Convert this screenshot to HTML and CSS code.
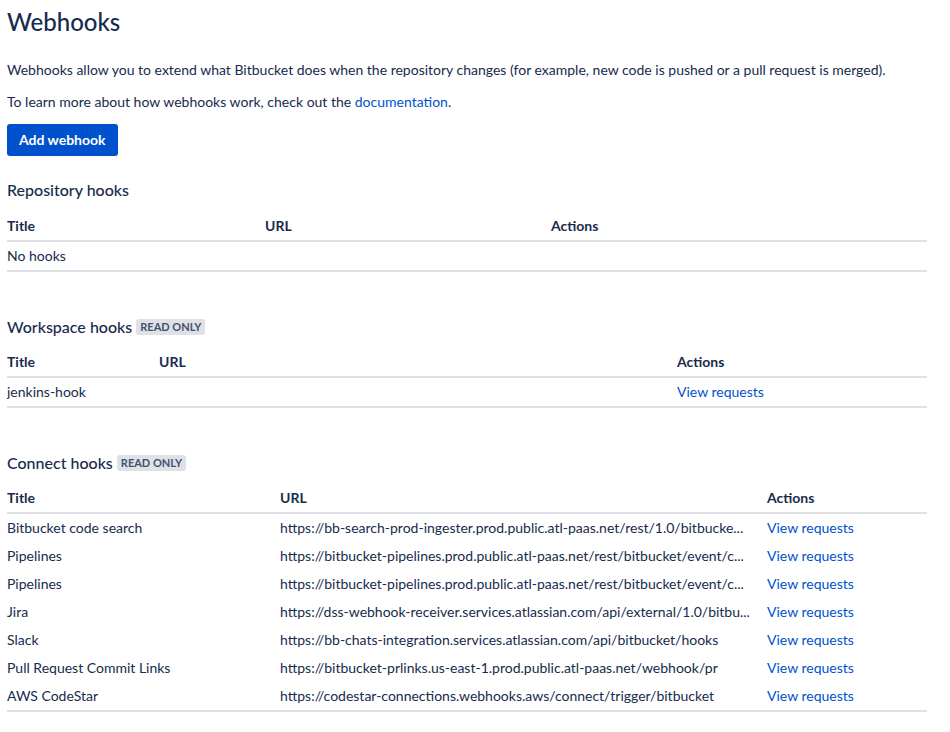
FILE: index.html
```html
<!DOCTYPE html>
<html lang="en">
<head>
<meta charset="utf-8">
<title>Webhooks</title>
<link rel="stylesheet" href="styles.css">
</head>
<body>
<main class="page">
  <h1 class="page-title">Webhooks</h1>
  <p class="intro">Webhooks allow you to extend what Bitbucket does when the repository changes (for example, new code is pushed or a pull request is merged).</p>
  <p class="intro">To learn more about how webhooks work, check out the <a href="#" class="link">documentation</a>.</p>
  <button class="btn-primary" type="button">Add webhook</button>

  <section class="hooks hooks-first">
    <h2 class="hooks-title">Repository hooks</h2>
    <table class="hooks-table">
      <colgroup><col class="c-repo-title"><col class="c-repo-url"><col></colgroup>
      <thead><tr><th>Title</th><th>URL</th><th>Actions</th></tr></thead>
      <tbody class="bordered"><tr><td colspan="3">No hooks</td></tr></tbody>
    </table>
  </section>

  <section class="hooks">
    <h2 class="hooks-title hooks-title-tagged">Workspace hooks <span class="lozenge">Read only</span></h2>
    <table class="hooks-table">
      <colgroup><col class="c-ws-title"><col class="c-ws-url"><col></colgroup>
      <thead><tr><th>Title</th><th>URL</th><th>Actions</th></tr></thead>
      <tbody class="bordered"><tr><td>jenkins-hook</td><td></td><td><a href="#" class="link">View requests</a></td></tr></tbody>
    </table>
  </section>

  <section class="hooks">
    <h2 class="hooks-title hooks-title-tagged">Connect hooks <span class="lozenge">Read only</span></h2>
    <table class="hooks-table">
      <colgroup><col class="c-cn-title"><col class="c-cn-url"><col></colgroup>
      <thead><tr><th>Title</th><th>URL</th><th>Actions</th></tr></thead>
      <tbody class="bordered">
        <tr><td>Bitbucket code search</td><td class="url">https://bb-search-prod-ingester.prod.public.atl-paas.net/rest/1.0/bitbucke...</td><td><a href="#" class="link">View requests</a></td></tr>
        <tr><td>Pipelines</td><td class="url">https://bitbucket-pipelines.prod.public.atl-paas.net/rest/bitbucket/event/c...</td><td><a href="#" class="link">View requests</a></td></tr>
        <tr><td>Pipelines</td><td class="url">https://bitbucket-pipelines.prod.public.atl-paas.net/rest/bitbucket/event/c...</td><td><a href="#" class="link">View requests</a></td></tr>
        <tr><td>Jira</td><td class="url">https://dss-webhook-receiver.services.atlassian.com/api/external/1.0/bitbu...</td><td><a href="#" class="link">View requests</a></td></tr>
        <tr><td>Slack</td><td class="url">https://bb-chats-integration.services.atlassian.com/api/bitbucket/hooks</td><td><a href="#" class="link">View requests</a></td></tr>
        <tr><td>Pull Request Commit Links</td><td class="url">https://bitbucket-prlinks.us-east-1.prod.public.atl-paas.net/webhook/pr</td><td><a href="#" class="link">View requests</a></td></tr>
        <tr><td>AWS CodeStar</td><td class="url">https://codestar-connections.webhooks.aws/connect/trigger/bitbucket</td><td><a href="#" class="link">View requests</a></td></tr>
      </tbody>
    </table>
  </section>
</main>
</body>
</html>
```

FILE: styles.css
```css
html, body {
  margin: 0;
  padding: 0;
  background: #ffffff;
}
body {
  font-family: Lato, "Noto Sans", sans-serif;
  font-size: 14px;
  line-height: 20px;
  color: #172B4D;
}
.page {
  padding: 8px 23px 8px 7px;
}
.page-title {
  margin: 0 0 24px;
  font-size: 24px;
  line-height: 28px;
  font-weight: 500;
  color: #172B4D;
}
.intro {
  margin: 0 0 12px;
}
.link {
  color: #0052CC;
  text-decoration: none;
}
.btn-primary {
  display: block;
  height: 32px;
  padding: 0 12px;
  border: 0;
  border-radius: 3px;
  background: #0052CC;
  color: #ffffff;
  font-family: inherit;
  font-size: 14px;
  font-weight: 700;
  line-height: 32px;
  cursor: pointer;
}
.hooks {
  margin-top: 45px;
}
.hooks-first {
  margin-top: 24px;
}
.hooks-title {
  display: flex;
  align-items: center;
  gap: 4px;
  margin: 0 0 12px;
  font-size: 16px;
  line-height: 20px;
  font-weight: 500;
  color: #172B4D;
}
.hooks-title-tagged {
  margin-bottom: 11px;
}
.lozenge {
  display: inline-block;
  height: 16px;
  padding: 0 4px;
  border-radius: 3px;
  background: #DFE1E6;
  color: #42526E;
  font-size: 11px;
  line-height: 16px;
  font-weight: 700;
  text-transform: uppercase;
}
.hooks-table {
  width: 100%;
  border-collapse: collapse;
  table-layout: fixed;
}
.hooks-table th,
.hooks-table td {
  padding: 4px 8px;
  text-align: left;
  vertical-align: middle;
  line-height: 20px;
  white-space: nowrap;
  overflow: hidden;
  text-overflow: ellipsis;
}
.hooks-table th:first-child,
.hooks-table td:first-child {
  padding-left: 0;
}
.hooks-table thead {
  border-bottom: 2px solid #DFE1E6;
}
.hooks-table th {
  font-weight: 700;
  color: #172B4D;
}
.hooks-table tbody.bordered {
  border-bottom: 2px solid #DFE1E6;
}
.c-repo-title { width: 250px; }
.c-repo-url { width: 286px; }
.c-ws-title { width: 144px; }
.c-ws-url { width: 518px; }
.c-cn-title { width: 265px; }
.c-cn-url { width: 487px; }
```
